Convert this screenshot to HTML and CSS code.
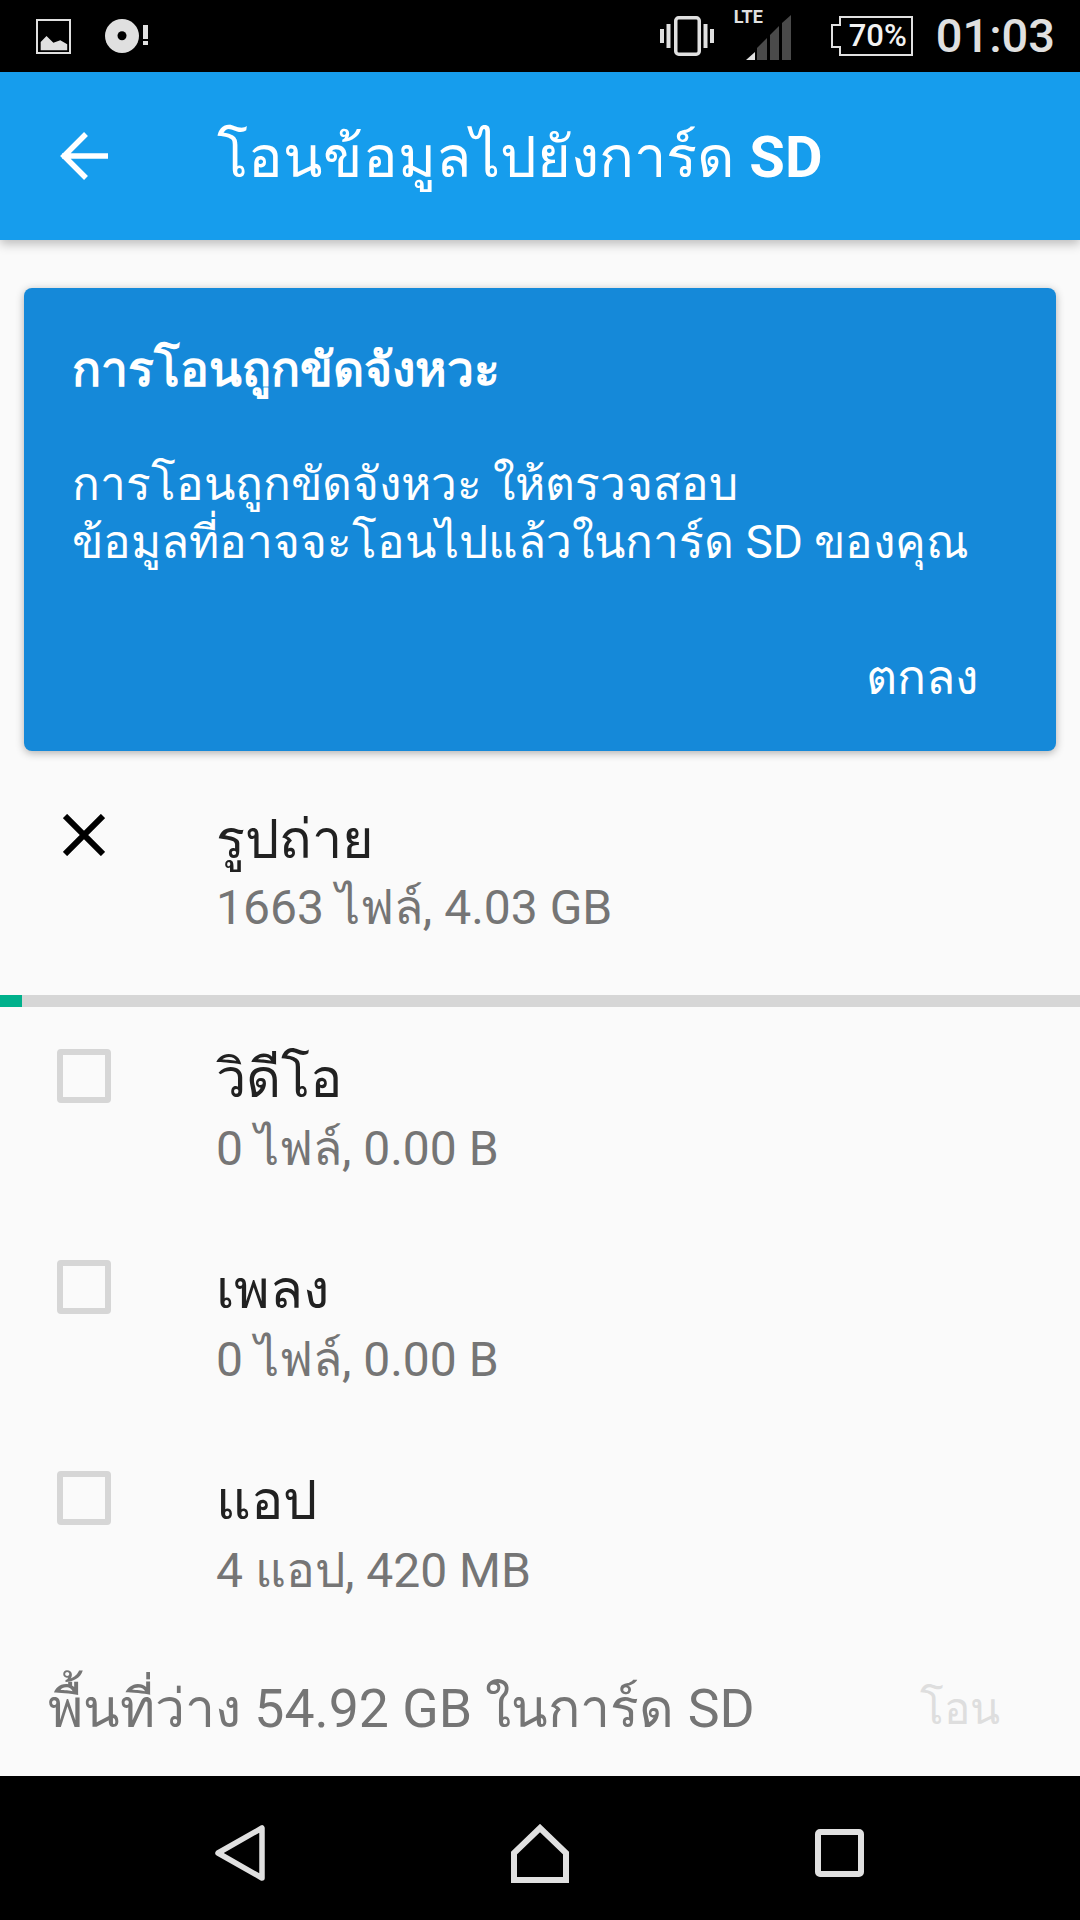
FILE: index.html
```html
<!doctype html>
<html lang="th">
  <head>
    <meta charset="UTF-8" />
    <meta name="viewport" content="width=device-width, initial-scale=1.0" />
    <title>โอนข้อมูลไปยังการ์ด SD</title>
    <link rel="stylesheet" href="styles.css">
  </head>
  <body>
    <div class="phone">
      <div class="status-bar">
        <div class="status-left">
          <svg width="35" height="35" viewBox="0 0 35 35">
            <rect x="1" y="1" width="33" height="33" fill="none" stroke="#e0e0e0" stroke-width="2" />
            <path d="M4.7 31.3V23L10.5 17L17.4 23.7L24.3 21.3L31.2 25.3V31.3Z" fill="#e0e0e0" />
          </svg>
          <svg width="44" height="36" viewBox="0 0 44 36">
            <circle cx="17" cy="18" r="17" fill="#e0e0e0" />
            <circle cx="17" cy="17.7" r="4.5" fill="#000" />
            <rect x="38" y="7" width="5" height="14" fill="#e0e0e0" />
            <rect x="38" y="23" width="5" height="4" fill="#e0e0e0" />
          </svg>
        </div>
        <div class="status-right">
          <svg class="icon-vibrate" width="54" height="40" viewBox="0 0 54 40">
            <rect x="15.75" y="1.75" width="23.5" height="36.5" rx="3" fill="none" stroke="#e0e0e0" stroke-width="3.5" />
            <rect x="0" y="13" width="4" height="14" fill="#e0e0e0" />
            <rect x="6.5" y="8" width="4" height="24" fill="#e0e0e0" />
            <rect x="43.5" y="8" width="4" height="24" fill="#e0e0e0" />
            <rect x="50" y="13" width="4" height="14" fill="#e0e0e0" />
          </svg>
          <div class="signal">
            <span class="lte">LTE</span>
            <svg width="45" height="45" viewBox="0 0 45 45">
              <path d="M0 45L9 37V45Z" fill="#e0e0e0" />
              <path d="M11 45V33L21 23V45Z" fill="#4a4a4a" />
              <path d="M24 45V20L33 11V45Z" fill="#4a4a4a" />
              <path d="M36 45V8L45 0V45Z" fill="#4a4a4a" />
            </svg>
          </div>
          <div class="battery">
            <svg class="battery-shell" width="82" height="40" viewBox="0 0 82 40">
              <path d="M9 1H81V39H9V31H1V9H9Z" fill="none" stroke="#e0e0e0" stroke-width="2" />
            </svg>
            <span class="battery-text">70%</span>
          </div>
          <span class="clock">01:03</span>
        </div>
      </div>

      <header class="app-bar">
        <svg class="back-arrow" width="49" height="48" viewBox="0 0 49 48">
          <path d="M3 24H49M27 2L5 24L27 46" fill="none" stroke="#fff" stroke-width="5.5" />
        </svg>
        <h1 class="app-title">โอนข้อมูลไปยังการ์ด <b>SD</b></h1>
      </header>

      <main class="content">
        <section class="error-card">
          <h2 class="card-title">การโอนถูกขัดจังหวะ</h2>
          <p class="card-text">การโอนถูกขัดจังหวะ ให้ตรวจสอบ<br />ข้อมูลที่อาจจะโอนไปแล้วในการ์ด SD ของคุณ</p>
          <div class="card-actions"><span class="card-ok">ตกลง</span></div>
        </section>

        <div class="row row-active">
          <div class="row-icon">
            <svg width="42" height="42" viewBox="0 0 42 42">
              <path d="M2 2L40 40M40 2L2 40" fill="none" stroke="#000" stroke-width="6" />
            </svg>
          </div>
          <div class="row-body">
            <div class="row-title">รูปถ่าย</div>
            <div class="row-sub">1663 ไฟล์, 4.03 GB</div>
          </div>
        </div>

        <div class="progress"><div class="progress-fill"></div></div>

        <div class="row">
          <div class="row-icon"><span class="checkbox"></span></div>
          <div class="row-body">
            <div class="row-title">วิดีโอ</div>
            <div class="row-sub">0 ไฟล์, 0.00 B</div>
          </div>
        </div>

        <div class="row">
          <div class="row-icon"><span class="checkbox"></span></div>
          <div class="row-body">
            <div class="row-title">เพลง</div>
            <div class="row-sub">0 ไฟล์, 0.00 B</div>
          </div>
        </div>

        <div class="row">
          <div class="row-icon"><span class="checkbox"></span></div>
          <div class="row-body">
            <div class="row-title">แอป</div>
            <div class="row-sub">4 แอป, 420 MB</div>
          </div>
        </div>
      </main>

      <footer class="summary">
        <span class="free-space">พื้นที่ว่าง 54.92 GB ในการ์ด SD</span>
        <span class="transfer">โอน</span>
      </footer>

      <nav class="nav-bar">
        <svg width="50" height="56" viewBox="0 0 50 56">
          <path d="M47 3V53L3 28Z" fill="none" stroke="#e0e0e0" stroke-width="5.5" stroke-linejoin="round" />
        </svg>
        <svg width="58" height="59" viewBox="0 0 58 59">
          <path d="M3 56V29L29 4L55 29V56Z" fill="none" stroke="#e0e0e0" stroke-width="6" />
        </svg>
        <svg width="49" height="48" viewBox="0 0 49 48">
          <rect x="3" y="3" width="43" height="42" rx="2" fill="none" stroke="#e0e0e0" stroke-width="6" />
        </svg>
      </nav>
    </div>
  </body>
</html>
```

FILE: styles.css
```css
* {
  box-sizing: border-box;
}

body {
  margin: 0;
  padding: 0;
  background-color: #fafafa;
  font-family: "Roboto", "Noto Sans", "DejaVu Sans", sans-serif;
}

.phone {
  width: 1080px;
  height: 1920px;
  display: flex;
  flex-direction: column;
  overflow: hidden;
  background-color: #fafafa;
}

.status-bar {
  height: 72px;
  flex: none;
  display: flex;
  justify-content: space-between;
  align-items: center;
  padding: 0 25px 0 36px;
  background-color: #000;
}

.status-left {
  display: flex;
  align-items: center;
  gap: 34px;
}

.status-right {
  height: 72px;
  display: flex;
  align-items: center;
}

.icon-vibrate {
  margin-right: 32px;
}

.signal {
  position: relative;
  width: 45px;
  height: 60px;
  align-self: flex-start;
  display: flex;
  align-items: flex-end;
  margin-right: 40px;
}

.lte {
  position: absolute;
  top: 6px;
  left: -12px;
  color: #e0e0e0;
  font-size: 18px;
  font-weight: 700;
}

.battery {
  position: relative;
  width: 82px;
  height: 40px;
  margin-right: 23px;
}

.battery-shell {
  display: block;
}

.battery-text {
  position: absolute;
  top: 3px;
  left: 18px;
  color: #f2f2f2;
  font-size: 31px;
  line-height: 34px;
  font-weight: 500;
}

.clock {
  color: #e0e0e0;
  font-size: 47px;
  line-height: 50px;
  font-weight: 500;
}

.app-bar {
  height: 168px;
  flex: none;
  display: flex;
  align-items: center;
  padding-left: 59px;
  background-color: #169ded;
  box-shadow: 0 4px 10px rgba(0, 0, 0, 0.25);
  position: relative;
}

.back-arrow {
  margin-right: 109px;
}

.app-title {
  margin: 0;
  color: #fff;
  font-size: 57.8px;
  font-weight: 400;
}

.content {
  flex: 1;
  padding-top: 48px;
}

.error-card {
  height: 463px;
  margin: 0 24px;
  padding: 0 48px;
  display: flex;
  flex-direction: column;
  border-radius: 8px;
  background-color: #1589d9;
  box-shadow: 0 2px 8px rgba(0, 0, 0, 0.3);
  color: #fff;
}

.card-title {
  margin: 52px 0 0;
  font-size: 48px;
  line-height: 60px;
  font-weight: 700;
}

.card-text {
  margin: 55px 0 0;
  font-size: 46px;
  line-height: 58px;
}

.card-actions {
  margin-top: auto;
  padding: 0 30px 48px 0;
  text-align: right;
}

.card-ok {
  font-size: 48px;
  line-height: 50px;
}

.row {
  height: 211px;
  display: flex;
}

.row-active {
  height: 244px;
}

.row-icon {
  width: 54px;
  margin-left: 57px;
  margin-right: 105px;
  padding-top: 42px;
}

.row-active .row-icon {
  padding-top: 63px;
}

.row-active .row-icon svg {
  display: block;
  margin-left: 6px;
}

.row-body {
  padding-top: 39px;
}

.row-active .row-body {
  padding-top: 56px;
}

.row-title {
  color: #212121;
  font-size: 54px;
  line-height: 66px;
}

.row-sub {
  margin-top: 3px;
  color: #757575;
  font-size: 48px;
  line-height: 68px;
}

.row-active .row-sub {
  margin-top: 1px;
}

.checkbox {
  display: block;
  width: 54px;
  height: 54px;
  border: 6px solid #d6d6d6;
  border-radius: 4px;
}

.progress {
  height: 12px;
  background-color: #d6d6d6;
}

.progress-fill {
  width: 22px;
  height: 100%;
  background-color: #00b18c;
}

.summary {
  height: 136px;
  flex: none;
  display: flex;
  justify-content: space-between;
  align-items: center;
  padding: 0 80px 0 48px;
}

.free-space {
  color: #757575;
  font-size: 53.6px;
}

.transfer {
  color: #dedede;
  font-size: 44px;
}

.nav-bar {
  height: 144px;
  flex: none;
  display: flex;
  align-items: center;
  gap: 246px;
  padding: 10px 0 0 215px;
  background-color: #000;
}
```
